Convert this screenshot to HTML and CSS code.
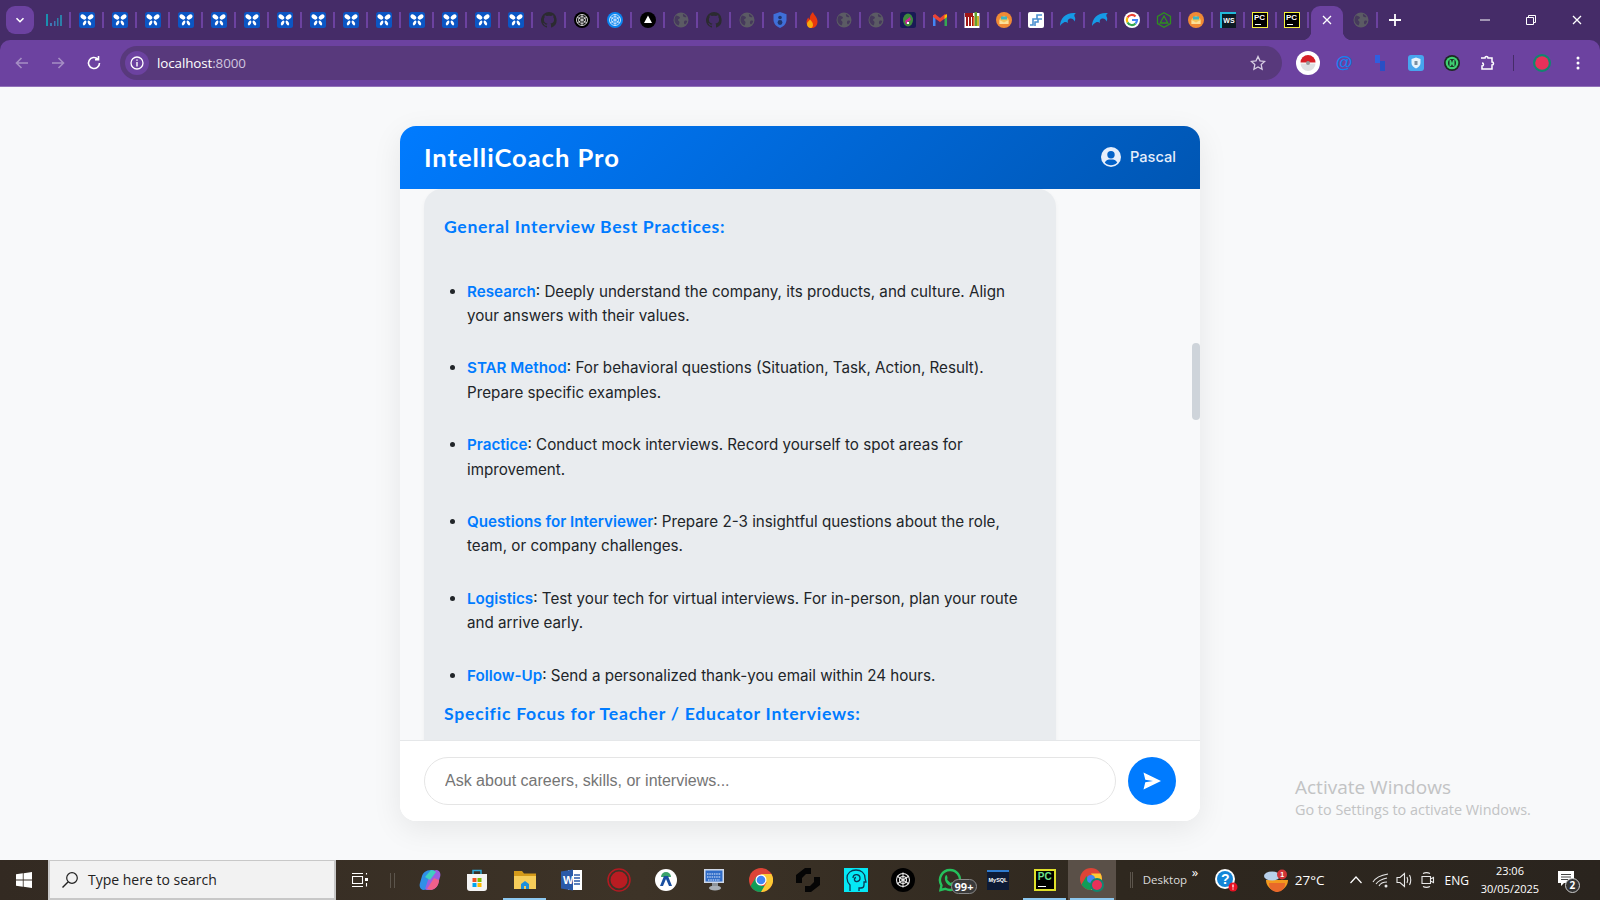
FILE: index.html
```html
<!DOCTYPE html>
<html lang="en">
<head>
<meta charset="utf-8">
<title>IntelliCoach Pro</title>
<link rel="stylesheet" href="styles.css">
</head>
<body>
<svg class="defs" aria-hidden="true">
  <symbol id="i-bars" viewBox="0 0 16 16"><path fill="#1a8fb0" d="M0 2h2v12H0z"/><path fill="#3f78b5" d="M4 11h2v3H4zM8 9h1.5v5H8z"/><path fill="#2c7fa8" d="M11 6h1.5v8H11zM14 3h2v11h-2z"/></symbol>
  <symbol id="i-fly" viewBox="0 0 16 16"><rect width="16" height="16" rx="2.5" fill="#0b56c4"/><g fill="#fff"><ellipse cx="4.4" cy="5" rx="3.2" ry="2.1" transform="rotate(35 4.4 5)"/><ellipse cx="11.6" cy="5" rx="3.2" ry="2.1" transform="rotate(-35 11.6 5)"/><ellipse cx="5.6" cy="11" rx="1.4" ry="2.6" transform="rotate(30 5.6 11)"/><ellipse cx="10.4" cy="11" rx="1.4" ry="2.6" transform="rotate(-30 10.4 11)"/></g></symbol>
  <symbol id="i-gh" viewBox="0 0 16 16"><path fill="#2b2b30" d="M8 0a8 8 0 0 0-2.500 15.600c.4.100.5-.2.500-.4v-1.500c-2.200.5-2.700-1-2.700-1-.4-.9-.9-1.200-.9-1.200-.7-.5.100-.5.100-.5.800.1 1.200.8 1.200.8.700 1.200 1.900.9 2.300.7.100-.5.300-.9.500-1.100-1.800-.2-3.600-.9-3.600-4 0-.9.300-1.600.8-2.100-.1-.2-.4-1 .1-2.100 0 0 .7-.2 2.200.8a7.600 7.600 0 0 1 4 0c1.500-1 2.200-.8 2.200-.8.400 1.100.2 1.900.1 2.100.5.600.8 1.300.8 2.100 0 3.100-1.900 3.700-3.700 3.900.3.300.6.800.6 1.500v2.200c0 .2.100.5.600.4A8 8 0 0 0 8 0z"/></symbol>
  <symbol id="i-knot" viewBox="0 0 16 16"><circle cx="8" cy="8" r="8" fill="#000"/><g fill="none" stroke="#ddd" stroke-width=".9"><circle cx="8" cy="8" r="5.500"/><circle cx="8" cy="8" r="3.500"/><path d="M3 5l10 6M3 11l10-6M8 2v12"/></g></symbol>
  <symbol id="i-knotb" viewBox="0 0 16 16"><circle cx="8" cy="8" r="8" fill="#0a84f0"/><g fill="none" stroke="#cfe8ff" stroke-width=".9"><circle cx="8" cy="8" r="5.500"/><circle cx="8" cy="8" r="3.500"/><path d="M3 5l10 6M3 11l10-6M8 2v12"/></g></symbol>
  <symbol id="i-tri" viewBox="0 0 16 16"><circle cx="8" cy="8" r="8" fill="#000"/><path fill="#fff" d="M8 3.500l4 7.500H4z"/></symbol>
  <symbol id="i-globe" viewBox="0 0 16 16"><circle cx="8" cy="8" r="7.500" fill="#5b5b64"/><path fill="#46395c" d="M3 3.500c2 .2 3.500.8 4 2.200-.5 1.300-2 1-2 2.400 0 1 1.500 1 1.500 2.500 0 1-.5 2-1 3C3 12.500 1.500 10.500 1.500 8c0-1.700.6-3.300 1.500-4.500zM10 2c1.500.5 2.800 1.500 3.500 3-1 .5-2.500.5-3.200-.4-.4-.7-.5-1.600-.3-2.600zM12 8.500c.8 0 1.500.2 2.200.4-.3 1.500-1 2.700-2.200 3.600-.8-.5-1.200-1.200-1-2.200.1-.9.500-1.800 1-1.800z"/></symbol>
  <symbol id="i-shield" viewBox="0 0 16 16"><path fill="#3f6fd8" d="M8 0l6.500 2.300v5.500c0 3.600-2.600 6.700-6.500 8.200-3.900-1.500-6.500-4.600-6.500-8.200V2.300z"/><circle cx="8" cy="5.500" r="1.800" fill="#20366e"/><circle cx="8" cy="10.500" r="2.400" fill="#20366e"/></symbol>
  <symbol id="i-flame" viewBox="0 0 16 16"><path fill="#e8380d" d="M9 0c.5 2.800 4.500 5 4.500 9.500C13.500 13.500 11 16 8 16s-5.500-2.500-5.500-6c0-2 1-3.500 2-4.500.1 1 .5 1.800 1.200 2C5.500 4.500 7 1.500 9 0z"/><path fill="#f7a90c" d="M6 7.500c1.500 1.500 3 3 3 5.500 0 1.400-.8 3-2.300 3-2 0-3.700-1.600-3.700-4 0-1.800 1.700-2.800 3-4.500z"/></symbol>
  <symbol id="i-droid" viewBox="0 0 16 16"><rect width="16" height="16" rx="2.500" fill="#191a55"/><ellipse cx="8" cy="8" rx="5" ry="6.500" fill="#3f8a3d"/><path fill="#d0219a" d="M5 9l5-4 1 3-3 1.500V12H6z"/><path fill="#fff" d="M7 10h2v2H7z"/></symbol>
  <symbol id="i-gmail" viewBox="0 0 16 16"><path fill="#4285f4" d="M1 3h2.500v11H1z"/><path fill="#34a853" d="M12.500 3H15v11h-2.500z"/><path fill="#ea4335" d="M1 3.500L3 2l5 4 5-4 2 1.500V5L8 10 1 5z"/><path fill="#fbbc04" d="M12.500 3.500L15 2v3l-2.500 2z"/></symbol>
  <symbol id="i-cal" viewBox="0 0 16 16"><rect x=".5" y="1" width="15" height="15" fill="#fff"/><path fill="#a01616" d="M1 1h8v3h1v10H8V5H7v9H5V5H4v9H2V5H1z"/><path fill="#5fa02e" d="M10.500 0H13v14h-2.500z"/><path fill="#e8682a" d="M9 5h1.500v9H9z"/><path fill="#c8b52a" d="M13 4h2v10h-2z"/></symbol>
  <symbol id="i-mail" viewBox="0 0 16 16"><circle cx="8" cy="8" r="8" fill="#f08a35"/><path fill="#f5c55a" d="M3.500 7L8 3.500 12.500 7v5h-9z"/><path fill="#3bb4c4" d="M5 4.500h6v3H5z"/><path fill="#fbe09a" d="M3.500 8L8 10.500 12.500 8v4h-9z"/></symbol>
  <symbol id="i-sq" viewBox="0 0 16 16"><rect width="16" height="16" rx="2" fill="#fff"/><path fill="none" stroke="#4a90d0" stroke-width="1.600" d="M2 13h3V7h4V3h5M7 14v-4h3V7h4"/></symbol>
  <symbol id="i-dolphin" viewBox="0 0 16 16"><path fill="#169ae6" d="M0 14C0 6 6 0 16 1c-1.500 1-2 2-1.500 3.500 1 1.500 1 3 0 5-.8-2.500-3-3.500-5.500-2.500C7.500 7.500 7.500 9.500 8 11c-1.200-1-2.800-1.200-4.200-.5C2.200 11.200 1 12.500 0 14z"/></symbol>
  <symbol id="i-google" viewBox="0 0 16 16"><circle cx="8" cy="8" r="8" fill="#fff"/><path fill="none" stroke="#ea4335" stroke-width="2.200" d="M3.500 5.500A5 5 0 0 1 11.500 4.500"/><path fill="none" stroke="#fbbc04" stroke-width="2.200" d="M3.500 5.500a5 5 0 0 0 0 5"/><path fill="none" stroke="#34a853" stroke-width="2.200" d="M3.500 10.500a5 5 0 0 0 8 1"/><path fill="none" stroke="#4285f4" stroke-width="2.200" d="M8 8h5a5 5 0 0 1-1.500 3.500"/></symbol>
  <symbol id="i-hex" viewBox="0 0 16 16"><path fill="none" stroke="#2f8f1f" stroke-width="1.300" d="M8 .8l6.500 3.700v7L8 15.200l-6.500-3.700v-7zM8 4l3.800 7H4.200z"/></symbol>
  <symbol id="i-x" viewBox="0 0 10 10"><path fill="none" stroke="currentColor" stroke-width="1.300" d="M1 1l8 8M9 1l-8 8"/></symbol>
  <symbol id="i-user" viewBox="0 0 20 20"><circle cx="10" cy="10" r="10" fill="#e6eefb"/><circle cx="10" cy="7.800" r="3.700" fill="#0261c8"/><path fill="#0261c8" d="M3.800 15.500C5 13 7 12.500 10 12.500s5 .5 6.200 3c-1.500 1.700-3.700 2.800-6.200 2.800s-4.700-1.100-6.200-2.800z"/></symbol>
</svg>

<header class="chrome">
  <div class="tabstrip">
    <div class="tab-menu"><svg class="ico-10" viewBox="0 0 10 10"><path d="M1.500 3.200L5 6.700l3.500-3.500" fill="none" stroke="#fff" stroke-width="1.600"/></svg></div>
    <div class="tabs">
      <div class="tab"><svg class="fav"><use href="#i-bars"/></svg></div>
      <div class="tab"><svg class="fav"><use href="#i-fly"/></svg></div>
      <div class="tab"><svg class="fav"><use href="#i-fly"/></svg></div>
      <div class="tab"><svg class="fav"><use href="#i-fly"/></svg></div>
      <div class="tab"><svg class="fav"><use href="#i-fly"/></svg></div>
      <div class="tab"><svg class="fav"><use href="#i-fly"/></svg></div>
      <div class="tab"><svg class="fav"><use href="#i-fly"/></svg></div>
      <div class="tab"><svg class="fav"><use href="#i-fly"/></svg></div>
      <div class="tab"><svg class="fav"><use href="#i-fly"/></svg></div>
      <div class="tab"><svg class="fav"><use href="#i-fly"/></svg></div>
      <div class="tab"><svg class="fav"><use href="#i-fly"/></svg></div>
      <div class="tab"><svg class="fav"><use href="#i-fly"/></svg></div>
      <div class="tab"><svg class="fav"><use href="#i-fly"/></svg></div>
      <div class="tab"><svg class="fav"><use href="#i-fly"/></svg></div>
      <div class="tab"><svg class="fav"><use href="#i-fly"/></svg></div>
      <div class="tab"><svg class="fav"><use href="#i-gh"/></svg></div>
      <div class="tab"><svg class="fav"><use href="#i-knot"/></svg></div>
      <div class="tab"><svg class="fav"><use href="#i-knotb"/></svg></div>
      <div class="tab"><svg class="fav"><use href="#i-tri"/></svg></div>
      <div class="tab"><svg class="fav"><use href="#i-globe"/></svg></div>
      <div class="tab"><svg class="fav"><use href="#i-gh"/></svg></div>
      <div class="tab"><svg class="fav"><use href="#i-globe"/></svg></div>
    </div>
    <div class="tabs tabs-narrow">
      <div class="tab"><svg class="fav"><use href="#i-shield"/></svg></div>
      <div class="tab"><svg class="fav"><use href="#i-flame"/></svg></div>
      <div class="tab"><svg class="fav"><use href="#i-globe"/></svg></div>
      <div class="tab"><svg class="fav"><use href="#i-globe"/></svg></div>
      <div class="tab"><svg class="fav"><use href="#i-droid"/></svg></div>
      <div class="tab"><svg class="fav"><use href="#i-gmail"/></svg></div>
      <div class="tab"><svg class="fav"><use href="#i-cal"/></svg></div>
      <div class="tab"><svg class="fav"><use href="#i-mail"/></svg></div>
      <div class="tab"><svg class="fav"><use href="#i-sq"/></svg></div>
      <div class="tab"><svg class="fav"><use href="#i-dolphin"/></svg></div>
      <div class="tab"><svg class="fav"><use href="#i-dolphin"/></svg></div>
      <div class="tab"><svg class="fav"><use href="#i-google"/></svg></div>
      <div class="tab"><svg class="fav"><use href="#i-hex"/></svg></div>
      <div class="tab"><svg class="fav"><use href="#i-mail"/></svg></div>
      <div class="tab"><span class="ws-ico">WS</span></div>
      <div class="tab"><span class="pc-ico">PC</span></div>
      <div class="tab"><span class="pc-ico">PC</span></div>
    </div>
    <div class="tab-active"><svg class="ico-10"><use href="#i-x"/></svg></div>
    <div class="tab tab-last"><svg class="fav"><use href="#i-globe"/></svg></div>
    <div class="tab-new"><svg class="ico-14" viewBox="0 0 14 14"><path d="M7 1v12M1 7h12" fill="none" stroke="#fff" stroke-width="1.800"/></svg></div>
    <div class="win-controls">
      <div class="win-btn"><svg class="ico-10" viewBox="0 0 10 10"><path d="M0 5h10" stroke="#fff" stroke-width="1"/></svg></div>
      <div class="win-btn"><svg class="ico-10" viewBox="0 0 10 10"><path d="M.5 2.500h7v7h-7zM2.500 2.500V.5h7v7h-2" fill="none" stroke="#fff" stroke-width="1"/></svg></div>
      <div class="win-btn"><svg class="ico-10"><use href="#i-x"/></svg></div>
    </div>
  </div>
  <div class="toolbar">
    <div class="nav-btn dim"><svg class="ico-16" viewBox="0 0 16 16"><path d="M14 8H3M7.500 3L2.500 8l5 5" fill="none" stroke="currentColor" stroke-width="1.600"/></svg></div>
    <div class="nav-btn dim"><svg class="ico-16" viewBox="0 0 16 16"><path d="M2 8h11M8.500 3l5 5-5 5" fill="none" stroke="currentColor" stroke-width="1.600"/></svg></div>
    <div class="nav-btn"><svg class="ico-16" viewBox="0 0 16 16"><path d="M13.500 8a5.500 5.500 0 1 1-1.700-4M12.500 1v3.600H9" fill="none" stroke="currentColor" stroke-width="1.600"/></svg></div>
    <div class="omnibox">
      <div class="site-info"><svg class="ico-14" viewBox="0 0 14 14"><circle cx="7" cy="7" r="6" fill="none" stroke="#fff" stroke-width="1.300"/><path d="M7 6v4.500M7 3.500v1.300" stroke="#fff" stroke-width="1.400"/></svg></div>
      <div class="url">localhost<span class="url-port">:8000</span></div>
      <svg class="star" viewBox="0 0 16 16"><path d="M8 1.500l2 4.300 4.700.6-3.500 3.200.9 4.700L8 12l-4.100 2.300.9-4.700L1.300 6.400 6 5.800z" fill="none" stroke="#d8cfe4" stroke-width="1.300"/></svg>
    </div>
    <div class="ext"><svg class="ico-24" viewBox="0 0 24 24"><circle cx="12" cy="12" r="12" fill="#fff"/><path fill="#d61f26" d="M4.500 11.500a7.500 7.500 0 0 1 15 0z"/><path fill="#dfe0e2" d="M4.500 12.500a7.500 7.500 0 0 0 15 0z"/><circle cx="12" cy="12" r="2" fill="#9a9a9a"/></svg></div>
    <div class="ext"><span class="at">@</span></div>
    <div class="ext"><svg class="ico-16" viewBox="0 0 16 16"><path fill="#2f5fe0" d="M3 0h5v8H3z"/><path fill="#2a4fc4" d="M8 6h5v10H8z"/></svg></div>
    <div class="ext"><svg class="ico-16" viewBox="0 0 16 16"><rect width="16" height="16" rx="3" fill="#47a5ee"/><path fill="#e6f2fb" d="M8 2.500l4.500 1.500v4c0 2.500-2 4.500-4.500 5.500-2.500-1-4.500-3-4.500-5.500V4z"/><path fill="#7a8ea0" d="M6.500 6h3v4h-3z"/></svg></div>
    <div class="ext"><svg class="ico-16" viewBox="0 0 16 16"><circle cx="8" cy="8" r="8" fill="#1d2a24"/><circle cx="8" cy="8" r="6.300" fill="#3ecf72"/><circle cx="8" cy="8" r="4" fill="#1d2a24"/><path fill="#3ecf72" d="M5.500 5h1.500l1 3 1-3h1.500v6H9l-1-2-1 2H5.500z"/></svg></div>
    <div class="ext"><svg class="ico-16" viewBox="0 0 16 16"><path d="M1 3h4a1.500 1.500 0 0 1 3 0h4v4a1.500 1.500 0 0 1 0 3v4H2v-3a1.500 1.500 0 0 0 0-3" fill="none" stroke="#fff" stroke-width="1.500"/></svg></div>
    <div class="tb-sep"></div>
    <div class="ext"><svg class="ico-18" viewBox="0 0 18 18"><circle cx="9" cy="9" r="9" fill="#12856f"/><circle cx="9" cy="9" r="6.800" fill="#e8305a"/></svg></div>
    <div class="ext"><svg class="ico-16" viewBox="0 0 16 16"><g fill="#fff"><circle cx="8" cy="3" r="1.500"/><circle cx="8" cy="8" r="1.500"/><circle cx="8" cy="13" r="1.500"/></g></svg></div>
  </div>
</header>

<main class="page">
  <section class="card">
    <div class="card-head">
      <h1 class="brand">IntelliCoach Pro</h1>
      <div class="user"><svg class="user-ico"><use href="#i-user"/></svg><span>Pascal</span></div>
    </div>
    <div class="chat">
      <article class="msg">
        <h3 class="msg-h">General Interview Best Practices:</h3>
        <ul class="msg-list">
          <li><strong>Research</strong>: Deeply understand the company, its products, and culture. Align your answers with their values.</li>
          <li><strong>STAR Method</strong>: For behavioral questions (Situation, Task, Action, Result). Prepare specific examples.</li>
          <li><strong>Practice</strong>: Conduct mock interviews. Record yourself to spot areas for improvement.</li>
          <li><strong>Questions for Interviewer</strong>: Prepare 2-3 insightful questions about the role, team, or company challenges.</li>
          <li><strong>Logistics</strong>: Test your tech for virtual interviews. For in-person, plan your route and arrive early.</li>
          <li><strong>Follow-Up</strong>: Send a personalized thank-you email within 24 hours.</li>
        </ul>
        <h3 class="msg-h msg-h2">Specific Focus for Teacher / Educator Interviews:</h3>
      </article>
      <div class="scroll-thumb"></div>
    </div>
    <div class="composer">
      <input class="ask" type="text" placeholder="Ask about careers, skills, or interviews...">
      <div class="send"><svg class="ico-20" viewBox="0 0 20 20"><path fill="#fff" d="M1.500 1.500L19 10 1.500 18.500l1.800-7.300L11 10l-7.700-1.200z"/></svg></div>
    </div>
  </section>
  <div class="activate">
    <div class="activate-t">Activate Windows</div>
    <div class="activate-s">Go to Settings to activate Windows.</div>
  </div>
</main>

<footer class="taskbar">
  <div class="start"><svg class="ico-16" viewBox="0 0 16 16"><path fill="#fff" d="M0 2.300l6.800-1v6.300H0zM7.600 1.200L16 0v7.600H7.600zM0 8.400h6.800v6.300l-6.800-1zM7.600 8.400H16V16l-8.400-1.200z"/></svg></div>
  <div class="search"><svg class="ico-18" viewBox="0 0 18 18"><circle cx="11" cy="7" r="5.300" fill="none" stroke="#222" stroke-width="1.200"/><path d="M7 11l-5.500 5.500" stroke="#222" stroke-width="1.400"/></svg><span>Type here to search</span></div>
  <div class="tb-app"><svg class="ico-16" viewBox="0 0 16 16"><path fill="none" stroke="#fff" stroke-width="1.100" d="M.5 4.500h10v7H.5zM0 1.500h11M0 14.500h11M14.500 1v1.500M14.500 11v3.500"/><path fill="#fff" d="M13 6h3v3h-3z"/></svg></div>
  <div class="tb-sep2"></div>
  <div class="tb-app"><svg class="ico-24" viewBox="0 0 24 24"><path fill="#2f8fe8" d="M4 8c2-5 5-6 11-6 2 0 2 2 1 4l-4 12c-1 3-4 4-7 4-3-1-4-4-3-7z"/><path fill="#9b5fe0" d="M20 16c-2 5-5 6-11 6-2 0-2-2-1-4l4-12c1-3 4-4 7-4 3 1 4 4 3 7z"/><path fill="#f0608a" d="M16 10l5 2c0 5-3 9-8 10l-4-1z"/><path fill="#3fd0c0" d="M13 2c2 0 4 1 5 2l-6 8-5-3z"/></svg></div>
  <div class="tb-app"><svg class="ico-24" viewBox="0 0 24 24"><path fill="none" stroke="#2ea8d8" stroke-width="1.500" d="M8 7V2.500h8V7"/><path fill="#f4f4f4" d="M2 6h20v14a3 3 0 0 1-3 3H5a3 3 0 0 1-3-3z"/><path fill="#f25022" d="M7.500 10h4v4h-4z"/><path fill="#7fba00" d="M12.500 10h4v4h-4z"/><path fill="#00a4ef" d="M7.500 15h4v4h-4z"/><path fill="#ffb900" d="M12.500 15h4v4h-4z"/></svg></div>
  <div class="tb-app run"><svg class="ico-24" viewBox="0 0 24 24"><path fill="#d49a1a" d="M1 3h8l2 2.500h12V21H1z"/><path fill="#f6cd5a" d="M1 8h22v13H1z"/><path fill="#1d8fdc" d="M8 21v-5l4-3 4 3v5h-3v-3h-2v3z"/></svg></div>
  <div class="tb-app"><svg class="ico-24" viewBox="0 0 24 24"><path fill="#fff" d="M8 2h14v20H8z"/><path stroke="#2a5aa8" stroke-width="1.300" d="M14 7h6M14 10h6M14 13h6M14 16h6"/><path fill="#2a5aa8" d="M1 3.500L13 1.500v21L1 20.500z"/><text class="word-t" x="3" y="15.500">W</text></svg></div>
  <div class="tb-app"><svg class="ico-24" viewBox="0 0 24 24"><circle cx="12" cy="12" r="11" fill="none" stroke="#b21a22" stroke-width="1.500"/><circle cx="12" cy="12" r="8.500" fill="#b91c22"/></svg></div>
  <div class="tb-app"><svg class="ico-24" viewBox="0 0 24 24"><circle cx="12" cy="12" r="11" fill="#fff"/><path fill="#3ba26a" d="M7 9a5 5 0 0 1 10 0z"/><path fill="#1a4fa0" d="M6 18l4-10h4l4 10h-3l-3-7-3 7z"/></svg></div>
  <div class="tb-app"><svg class="ico-24" viewBox="0 0 24 24"><path fill="#cfd8e8" d="M2 1h20v14H2z"/><path fill="#2f6cc8" d="M3.500 2.500h17v11h-17z"/><path stroke="#e8f0ff" stroke-width="1.200" stroke-dasharray="1.500 .8" d="M5 6h14M5 9h14M6 12h12"/><ellipse cx="13" cy="20" rx="6" ry="2.500" fill="#aab0b6"/><path fill="#8e949a" d="M10 15h6v3h-6z"/></svg></div>
  <div class="tb-app"><svg class="ico-24" viewBox="0 0 24 24"><circle cx="12" cy="12" r="12" fill="#dd4437"/><path fill="#119d58" d="M12 24a12 12 0 0 1-10.400-6L7 9l5 9h6z"/><path fill="#fcc934" d="M12 6h10.400A12 12 0 0 1 12 24l5.500-9.500z"/><circle cx="12" cy="12" r="5.500" fill="#fff"/><circle cx="12" cy="12" r="4.300" fill="#4285f4"/></svg></div>
  <div class="tb-app"><svg class="ico-24" viewBox="0 0 24 24"><path fill="#050505" d="M9 0h6v6H10L6 10v5H0V7zM15 24H9v-6h5l4-4V9h6v8z"/></svg></div>
  <div class="tb-app"><svg class="ico-24" viewBox="0 0 24 24"><path fill="#05e8f5" d="M0 0h24v24H0z"/><path fill="none" stroke="#0a3a55" stroke-width="1.300" d="M6 23v-6c-2-2-3-4-3-7 0-5 4-8 9-8s9 3 9 8c0 1.500 1 3 1 4h-2v3c0 2-1 3-3 3h-2v3M9 10a3.500 3.500 0 1 1 4 3.500 2 2 0 1 1-1-4"/></svg></div>
  <div class="tb-app"><svg class="ico-24" viewBox="0 0 24 24"><circle cx="12" cy="12" r="12" fill="#000"/><g fill="none" stroke="#e8e8e8" stroke-width="1.100"><circle cx="12" cy="12" r="6.500"/><circle cx="12" cy="12" r="3.500"/><path d="M6 8l12 8M18 8L6 16M12 4.500v15"/></g></svg></div>
  <div class="tb-app wa"><svg class="ico-24" viewBox="0 0 24 24"><path fill="none" stroke="#25c05c" stroke-width="2.400" d="M12 2a10 10 0 0 0-8.500 15.300L2.500 22l4.800-1.200A10 10 0 1 0 12 2z"/><path fill="#25c05c" d="M8 7c1 0 1.500 2 1.500 3 0 1-.5 1 0 2l3 3c1 0 1-1 2-.5 1 .5 2 1 2 1.500-1 3-4 2.500-6 1-3-2-5-7-2.500-10z"/></svg><span class="badge99">99+</span></div>
  <div class="tb-app"><svg class="ico-24" viewBox="0 0 24 24"><path fill="#0d1b36" d="M1 2h22v20H1z"/><path fill="#2f7cd0" d="M1 2h22v2H1z"/><text class="mysql-t" x="2.500" y="14">MySQL</text></svg></div>
  <div class="tb-app run"><span class="pc-big">PC</span></div>
  <div class="tb-app run active"><svg class="ico-24" viewBox="0 0 24 24"><circle cx="11" cy="11" r="11" fill="#dd4437"/><path fill="#119d58" d="M11 22A11 11 0 0 1 1.500 16.500L6.500 8l4.500 8.500h5.500z"/><path fill="#fcc934" d="M11 5.500h9.500A11 11 0 0 1 11 22l5-8.500z"/><circle cx="11" cy="11" r="4" fill="#4285f4"/><circle cx="17" cy="17" r="7" fill="#12856f"/><circle cx="17" cy="17" r="5" fill="#e8305a"/></svg></div>
  <div class="tray">
    <div class="tb-sep3"></div>
    <div class="desk">Desktop<span class="chev">»</span></div>
    <svg class="ico-24 help" viewBox="0 0 24 24"><circle cx="11" cy="11" r="10" fill="#fff"/><circle cx="11" cy="11" r="8" fill="#1485d8"/><text class="help-t" x="7" y="16">?</text><circle cx="19" cy="19" r="4.500" fill="#e81123"/><path d="M19 16.500v3M19 20.500v1" stroke="#fff" stroke-width="1.300"/></svg>
    <svg class="weather" viewBox="0 0 26 24"><path fill="#f39a1e" d="M3 12h22a11 11 0 0 1-22 0z"/><path fill="#e8692a" d="M6 15h16a8 8 0 0 1-16 2z"/><ellipse cx="9" cy="8" rx="8" ry="4.500" fill="#b8d0ea"/><circle cx="19" cy="6.500" r="5" fill="#d13438"/><text class="weather-t" x="17.300" y="9.300">1</text></svg>
    <span class="temp">27°C</span>
    <svg class="ico-14 caret" viewBox="0 0 14 14"><path d="M1.500 10L7 4l5.500 6" fill="none" stroke="#fff" stroke-width="1.200"/></svg>
    <svg class="ico-18 wifi" viewBox="0 0 18 18"><g fill="none" stroke="#e8e8e8" stroke-width="1.100"><path d="M1 11c3-5 9-7 15-8M4 13c2-3 6-5 11-6M7 15c1-2 4-4 8-4"/></g><circle cx="14" cy="15" r="1.500" fill="#e8e8e8"/></svg>
    <svg class="ico-18 vol" viewBox="0 0 18 18"><path fill="none" stroke="#e8e8e8" stroke-width="1.100" d="M1 6.500h3l4.500-4v13l-4.500-4H1zM11 6c1 2 1 4 0 6M13.500 4c1.500 3 1.500 7 0 10"/></svg>
    <svg class="ico-18 cam" viewBox="0 0 18 18"><path fill="none" stroke="#e8e8e8" stroke-width="1.100" d="M3 5.500h8.500v7H3zM11.500 8l3-1.500v5l-3-1.500M4 2.500c2-1 5-1 7 0M4 15.500c2 1 5 1 7 0"/></svg>
    <span class="eng">ENG</span>
    <div class="clock"><div>23:06</div><div>30/05/2025</div></div>
    <div class="notif"><svg class="ico-18" viewBox="0 0 18 18"><path fill="#fff" d="M0 0h16v12H6l-3 3v-3H0z"/><path stroke="#444" d="M3 3.500h10M3 6h10M3 8.500h7"/></svg><span class="notif-n">2</span></div>
  </div>
</footer>
</body>
</html>
```

FILE: styles.css
```css
* { box-sizing: border-box; }
html, body { height: 100%; }
body {
  margin: 0;
  display: flex;
  flex-direction: column;
  height: 900px;
  overflow: hidden;
  font-family: "Inter", "Liberation Sans", sans-serif;
  background: #f8f9fa;
}
.defs { position: absolute; width: 0; height: 0; }
.ico-10 { width: 10px; height: 10px; }
.ico-14 { width: 14px; height: 14px; }
.ico-16 { width: 16px; height: 16px; }
.ico-18 { width: 18px; height: 18px; }
.ico-20 { width: 20px; height: 20px; }
.ico-24 { width: 24px; height: 24px; }

/* browser chrome */
.chrome { flex: none; height: 87px; background: #452c68; color: #fff; }
.tabstrip {
  height: 40px;
  background: #452c68;
  display: flex;
  align-items: flex-end;
  position: relative;
}
.tab-menu {
  width: 28px; height: 28px;
  margin: 0 3px 6px 6px;
  border-radius: 9px;
  background: #6c42a0;
  display: flex; align-items: center; justify-content: center;
}
.tabs { display: flex; }
.tabs-narrow { margin-left: 1px; }
.tab {
  width: 33px; height: 40px;
  display: flex; align-items: center; justify-content: center;
  position: relative;
}
.tabs-narrow .tab { width: 32px; }
.tab::after {
  content: "";
  position: absolute;
  right: -1px; top: 12px;
  width: 2px; height: 16px;
  background: #6c42a0;
}
.fav { width: 16px; height: 16px; }
.tab-active {
  width: 32px; height: 34px;
  margin: 0 2px 0 3px;
  background: #6c42a0;
  border-radius: 9px 9px 0 0;
  display: flex; align-items: center; justify-content: center;
  padding-bottom: 6px;
  color: #fff;
  position: relative;
  z-index: 1;
}
.tab-active::before,
.tab-active::after {
  content: "";
  position: absolute;
  bottom: 0;
  width: 9px; height: 9px;
}
.tab-active::before {
  left: -9px;
  background: radial-gradient(circle at 0 0, transparent 9px, #6c42a0 9.5px);
}
.tab-active::after {
  right: -9px;
  background: radial-gradient(circle at 100% 0, transparent 9px, #6c42a0 9.5px);
}
.tab-last { width: 32px; }
.tab-new {
  width: 36px; height: 40px;
  display: flex; align-items: center; justify-content: center;
}
.win-controls { display: flex; margin-left: auto; height: 40px; }
.win-btn {
  width: 46px;
  display: flex; align-items: center; justify-content: center;
  color: #fff;
}
.ws-ico {
  width: 16px; height: 16px;
  background: #0c1a24;
  border-top: 2px solid #22b8d8;
  border-left: 2px solid #22b8d8;
  font: 700 7px "Liberation Sans", sans-serif;
  color: #fff;
  line-height: 13px;
  text-align: center;
}
.pc-ico {
  width: 16px; height: 16px;
  background: #000;
  border: 1px solid #f6f23a;
  font: 700 8px/9px "Liberation Sans", sans-serif;
  color: #fff;
  padding-left: 1px;
  position: relative;
}
.pc-ico::after {
  content: "";
  position: absolute;
  left: 2px; bottom: 2px;
  width: 6px; height: 1px;
  background: #fff;
}

.toolbar {
  height: 47px;
  padding-left: 4px;
  display: flex;
  align-items: center;
  background: #6c42a0;
  border-bottom: 1px solid #9172b8;
  border-radius: 10px 10px 0 0;
}
.nav-btn { width: 36px; display: flex; justify-content: center; color: #fff; }
.nav-btn.dim { color: #a58ec4; }
.omnibox {
  width: 1162px; height: 34px;
  margin-left: 8px;
  margin-right: 8px;
  border-radius: 17px;
  background: #58397c;
  display: flex;
  align-items: center;
  padding: 0 16px 0 5px;
}
.site-info {
  width: 24px; height: 24px;
  border-radius: 50%;
  background: #6c42a0;
  display: flex; align-items: center; justify-content: center;
  margin-right: 8px;
}
.url { font: 13.4px "Open Sans", sans-serif; color: #fff; letter-spacing: -.1px; }
.url-port { color: #d0c4df; }
.star { width: 16px; height: 16px; margin-left: auto; }
.ext { width: 36px; display: flex; justify-content: center; align-items: center; }
.at { font: 700 17px "Liberation Sans", sans-serif; color: #1481f0; }
.tb-sep { width: 1px; height: 16px; margin: 0 10px 0 7px; background: #452c68; }

/* page */
.page {
  flex: 1;
  min-height: 0;
  display: flex;
  align-items: center;
  justify-content: center;
  position: relative;
}
.card {
  width: 800px; height: 695px;
  border-radius: 16px;
  background: #fff;
  box-shadow: 0 8px 30px rgba(0, 0, 0, .08);
  display: flex;
  flex-direction: column;
  overflow: hidden;
}
.card-head {
  flex: none;
  height: 63px;
  padding: 0 24px 2px;
  display: flex;
  align-items: center;
  justify-content: space-between;
  background: linear-gradient(135deg, #007bff, #0056b3);
  color: #fff;
}
.brand {
  margin: 0;
  font: 700 25.6px "Lato", sans-serif;
  letter-spacing: .95px;
}
.user { display: flex; align-items: center; gap: 9px; font-size: 14.6px; font-weight: 500; color: #e6eefb; }
.user-ico { width: 20px; height: 20px; }
.chat {
  flex: 1;
  min-height: 0;
  overflow: hidden;
  padding: 0 24px;
  background: #f8f9fa;
  position: relative;
}
.msg {
  width: 632px;
  padding: 26px 20px 60px;
  border-radius: 18px 18px 0 0;
  background: #e9ecef;
  box-shadow: 0 2px 5px rgba(0, 0, 0, .04);
  color: #212529;
  font-size: 15.2px;
  line-height: 24.32px;
}
.msg-h {
  margin: 0;
  font: 700 17.6px/24px "Lato", sans-serif;
  letter-spacing: .68px;
  color: #007bff;
}
.msg-h2 { margin-top: 14.3px; letter-spacing: .76px; }
.msg-list { margin: 40.7px 0 0; padding-left: 23px; }
.msg-list li { margin-bottom: 28.16px; }
.msg-list li:last-child { margin-bottom: 0; }
.msg-list strong { font-weight: 600; color: #007bff; }
.scroll-thumb {
  position: absolute;
  right: 0; top: 154px;
  width: 8px; height: 77px;
  border-radius: 4px;
  background: #ced4da;
}
.composer {
  flex: none;
  height: 81px;
  padding: 16px 24px;
  border-top: 1px solid #e5e7e9;
  background: #fff;
  display: flex;
  gap: 12px;
}
.ask {
  flex: 1;
  height: 48px;
  border: 1px solid #e5e5e5;
  border-radius: 24px;
  padding: 0 20px;
  font: 16px "Liberation Sans", sans-serif;
  outline: none;
}
.ask::placeholder { color: #757575; opacity: 1; }
.send {
  width: 48px; height: 48px;
  border-radius: 50%;
  background: #007bff;
  display: flex; align-items: center; justify-content: center;
}
.activate {
  position: absolute;
  left: 1295px; top: 687px;
  color: #c2c3c4;
  font-family: "Open Sans", sans-serif;
}
.activate-t { font-size: 19px; line-height: 26px; }
.activate-s { font-size: 14.4px; line-height: 20px; }

/* taskbar */
.taskbar {
  flex: none;
  height: 40px;
  background: linear-gradient(90deg, #332a22, #3d3327 40%, #2f281f 70%, #2a241e);
  display: flex;
  align-items: stretch;
  color: #fff;
  font-family: "Open Sans", sans-serif;
}
.start { width: 48px; display: flex; align-items: center; justify-content: center; }
.search {
  width: 288px;
  background: #f2f2f2;
  border: 1px solid #c8c8c8;
  border-width: 1px 2px 2px;
  display: flex;
  align-items: center;
  padding-left: 11px;
  gap: 9px;
  color: #222;
  font-size: 14px;
}
.tb-app {
  width: 47.3px;
  display: flex; align-items: center; justify-content: center;
  position: relative;
}
.tb-sep2 { width: 23px; position: relative; }
.tb-sep2::after {
  content: "";
  position: absolute;
  left: 7px; top: 13px;
  width: 3px; height: 15px;
  border-left: 1px solid #5c554c;
  border-right: 1px solid #5c554c;
}
.tb-app.run::after {
  content: "";
  position: absolute;
  left: 2px; right: 2px; bottom: 0;
  height: 2px;
  background: #8cc8f0;
}
.tb-app.active { background: #5a5048; }
.word-t { font: 700 11px "Liberation Sans", sans-serif; fill: #fff; }
.mysql-t { font: 700 5.500px "Liberation Sans", sans-serif; fill: #fff; }
.pc-big {
  width: 22px; height: 22px;
  border: 2px solid #dfe02a;
  background: #000;
  font: 700 10px/11px "Liberation Sans", sans-serif;
  color: #6fe08a;
  padding-left: 2px;
  position: relative;
}
.pc-big::after {
  content: "";
  position: absolute;
  left: 2px; bottom: 2px;
  width: 8px; height: 1.500px;
  background: #fff;
}
.badge99 {
  position: absolute;
  left: 24px; top: 19px;
  padding: 0 3px;
  border: 1px solid #8a8a8a;
  border-radius: 9px;
  background: #3a3a3a;
  font: 700 11px/13px "Open Sans", sans-serif;
  color: #fff;
}
.tray { display: flex; align-items: center; position: relative; flex: 1; }
.tb-sep3 {
  margin-left: 14px;
  width: 3px; height: 16px;
  border-left: 1px solid #5c554c;
  border-right: 1px solid #5c554c;
}
.desk { margin-left: 10px; margin-top: -2px; font-size: 11.5px; color: #ddd; position: relative; width: 71px; }
.chev { position: absolute; left: 49px; top: -9px; font-size: 13px; color: #fff; }
.help { margin-left: 0; }
.weather { width: 26px; height: 24px; margin-left: 25px; }
.help-t { font: 700 14px "Liberation Sans", sans-serif; fill: #fff; }
.weather-t { font: 700 7px "Liberation Sans", sans-serif; fill: #fff; }
.temp { margin-left: 6px; font-size: 13.5px; }
.caret { margin-left: 25px; }
.wifi { margin-left: 9px; }
.vol { margin-left: 6px; }
.cam { margin-left: 5px; }
.eng { margin-left: 7px; font-size: 12px; }
.clock { margin-left: 11px; width: 60px; text-align: center; font-size: 11px; line-height: 18px; }
.notif { margin-left: 18px; position: relative; display: flex; }
.notif-n {
  position: absolute;
  left: 7px; top: 7px;
  width: 15px; height: 15px;
  border: 1px solid #ccc;
  border-radius: 50%;
  background: #333;
  font: 700 10px/13px "Open Sans", sans-serif;
  text-align: center;
}
```
